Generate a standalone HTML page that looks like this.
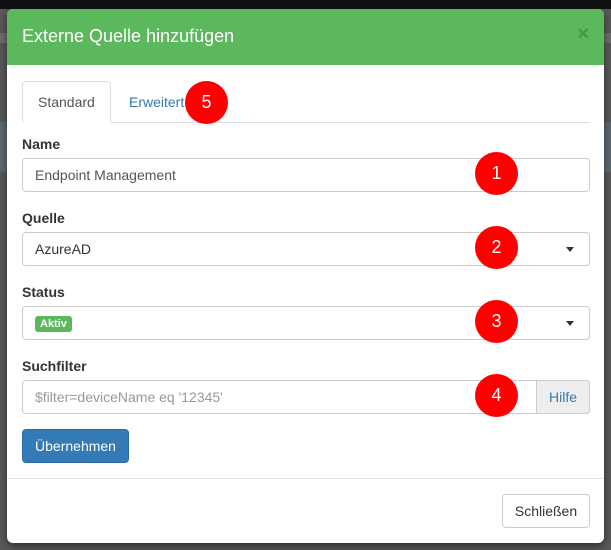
<!DOCTYPE html>
<html><head><meta charset="utf-8"><style>
*{box-sizing:border-box}
body{margin:0;width:611px;height:550px;background:#595959;font-family:"Liberation Sans",sans-serif;font-size:14px;color:#333;position:relative;overflow:hidden}
.top{position:absolute;left:0;top:0;width:611px;height:9px;background:#111}
.band{position:absolute;left:0;top:33px;width:611px;height:10px;background:#6e6e6e}
.band2{position:absolute;left:0;top:122px;width:611px;height:50px;background:#5e6a73}
.modal{position:absolute;left:7px;top:9px;width:597px;height:534px;background:#fff;border-radius:6px;overflow:hidden;box-shadow:0 3px 9px rgba(0,0,0,.5)}
.hd{height:56px;background:#5cb85c;color:#fff;font-size:18px;padding:17px 15px}
.x{position:absolute;right:15px;top:14px;color:#3f7f3f;font-weight:bold;font-size:20px;opacity:.6}
.abs{position:absolute}
.lbl{position:absolute;left:15px;font-weight:bold;font-size:14px}
.inp{position:absolute;left:15px;width:568px;height:34px;border:1px solid #ccc;border-radius:4px;padding:8px 12px 6px;color:#555}
.caret{position:absolute;right:15px;top:14px;border-left:4px solid transparent;border-right:4px solid transparent;border-top:5px solid #333}
.c{position:absolute;width:43px;height:43px;border-radius:50%;background:#f00;color:#fff;font-size:18px;text-align:center;line-height:43px;font-family:"Liberation Sans",sans-serif}
</style></head><body>
<div class="top"></div><div class="band"></div><div class="band2"></div>
<div class="modal">
<div class="hd">Externe Quelle hinzufügen</div><div class="x">×</div>
<div class="abs" style="left:15px;top:113px;width:568px;border-top:1px solid #ddd"></div>
<div class="abs" style="left:15px;top:72px;width:89px;height:42px;border:1px solid #ddd;border-bottom:1px solid #fff;border-radius:4px 4px 0 0;background:#fff;padding:12px 15px;color:#555">Standard</div>
<div class="abs" style="left:122px;top:85px;color:#337ab7">Erweitert</div>
<div class="lbl" style="top:127px">Name</div>
<div class="inp" style="top:149px">Endpoint Management</div>
<div class="lbl" style="top:201px">Quelle</div>
<div class="inp" style="top:223px;color:#333">AzureAD<div class="caret"></div></div>
<div class="lbl" style="top:275px">Status</div>
<div class="inp" style="top:297px"><span style="background:#5cb85c;color:#fff;font-weight:bold;font-size:11px;padding:2px 5px;border-radius:3px;position:relative;top:-1px">Aktiv</span><div class="caret"></div></div>
<div class="lbl" style="top:349px">Suchfilter</div>
<div class="inp" style="top:371px;color:#999">$filter=deviceName eq '12345'</div>
<div class="abs" style="left:529px;top:371px;width:54px;height:34px;background:#eee;border:1px solid #ccc;border-radius:0 4px 4px 0;color:#337ab7;text-align:center;line-height:32px">Hilfe</div>
<div class="abs" style="left:15px;top:420px;width:107px;height:34px;background:#337ab7;border:1px solid #2e6da4;border-radius:4px;color:#fff;text-align:center;line-height:32px">Übernehmen</div>
<div class="abs" style="left:0;top:469px;width:597px;border-top:1px solid #e5e5e5"></div>
<div class="abs" style="left:495px;top:485px;width:88px;height:34px;border:1px solid #ccc;border-radius:4px;text-align:center;line-height:32px">Schließen</div>
</div>
<div class="c" style="left:185px;top:81px">5</div>
<div class="c" style="left:475px;top:152px">1</div>
<div class="c" style="left:475px;top:226px">2</div>
<div class="c" style="left:475px;top:300px">3</div>
<div class="c" style="left:475px;top:374px">4</div>
</body></html>
